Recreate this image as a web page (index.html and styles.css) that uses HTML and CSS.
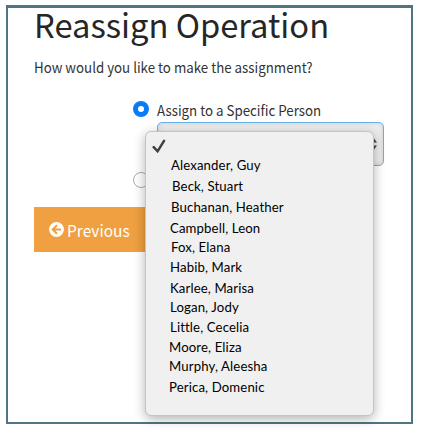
FILE: index.html
```html
<!DOCTYPE html>
<html lang="en">
<head>
<meta charset="utf-8">
<title>Reassign Operation</title>
<link rel="stylesheet" href="styles.css">
</head>
<body>
<main class="frame">
  <h1 class="title">Reassign Operation</h1>
  <p class="question">How would you like to make the assignment?</p>
  <div class="choice">
    <span class="radio checked"></span>
    <div class="field">
      <label class="label">Assign to a Specific Person</label>
      <div class="select">
        <svg class="arrows" width="8" height="14" viewBox="0 0 8 14"><path d="M4 0L8 5.5H0zM4 14L0 8.5H8z" fill="#444"/></svg>
        <div class="menu">
          <svg class="check" width="14" height="15" viewBox="0 0 14 15"><path d="M1.7 8.2L5.6 12.3L12 1.8" fill="none" stroke="#414141" stroke-width="2.5" stroke-linecap="round" stroke-linejoin="miter"/></svg>
          <ul class="people">
            <li class="in2">Alexander, Guy</li>
            <li class="in3">Beck, Stuart</li>
            <li class="in2">Buchanan, Heather</li>
            <li class="in1">Campbell, Leon</li>
            <li class="in2">Fox, Elana</li>
            <li class="in1">Habib, Mark</li>
            <li class="in1">Karlee, Marisa</li>
            <li class="in1">Logan, Jody</li>
            <li class="in1">Little, Cecelia</li>
            <li>Moore, Eliza</li>
            <li>Murphy, Aleesha</li>
            <li>Perica, Domenic</li>
          </ul>
        </div>
      </div>
    </div>
  </div>
  <div class="choice second"><span class="radio"></span></div>
  <button class="previous">
    <svg width="15" height="15" viewBox="0 0 15 15"><circle cx="7.5" cy="7.5" r="7.4" fill="#fff"/><path d="M8 3.2L3.7 7.5L8 11.8M4 7.5H12" fill="none" stroke="#f0a040" stroke-width="2"/></svg>
    <span class="caption">Previous</span>
  </button>
</main>
</body>
</html>
```
FILE: styles.css
```css
* { box-sizing: border-box; }
body {
  margin: 0;
  height: 430px;
  padding: 5px 10px 6px 6px;
  background: #fff;
  overflow: hidden;
  font-family: "Noto Sans CJK SC", "Noto Sans", sans-serif;
  color: #333;
}
.frame {
  width: 407px;
  height: 419px;
  border: 2px solid #4f7585;
  border-top-width: 3px;
  padding-left: 26px;
}
.title {
  margin: 0;
  height: 46px;
  font-size: 32.7px;
  line-height: 32px;
  font-weight: 400;
  color: #262626;
  white-space: nowrap;
}
.question {
  margin: 3px 0 0;
  height: 20px;
  font-size: 14.5px;
  line-height: 20px;
  white-space: nowrap;
  transform: scaleX(.918);
  transform-origin: left;
}
.choice {
  display: flex;
  gap: 8px;
  margin: 23px 0 0 99px;
}
.radio {
  flex: none;
  width: 16px;
  height: 16px;
  margin-top: 1px;
  border: 1px solid #aaa;
  border-radius: 50%;
  background: #fff;
}
.radio.checked { border: 5.5px solid #087cf5; }
.label {
  display: block;
  height: 22px;
  font-size: 14.5px;
  line-height: 20px;
  white-space: nowrap;
  transform: scaleX(.918);
  transform-origin: left;
}
.select {
  position: relative;
  display: flex;
  align-items: center;
  justify-content: flex-end;
  width: 227px;
  height: 44px;
  padding-right: 6px;
  border: 1px solid #67afe9;
  border-radius: 5px;
  background: #ededed;
  box-shadow: inset 0 0 4px #ccc;
}
.menu {
  position: absolute;
  z-index: 1;
  left: -13px;
  top: 8px;
  width: 229px;
  height: 285px;
  padding-left: 23px;
  border: 1px solid #c4c4c4;
  border-radius: 6px;
  background: #f0f0f0;
  box-shadow: 0 3px 12px rgba(0, 0, 0, .3);
}
.check { display: block; margin: 7px 0 0 -17px; }
.people {
  display: grid;
  grid-template-rows: 21px 21px 21px 19px 20px 21px 19px 20px 20px 19px 21px 20px;
  margin: 1px 0 0;
  padding: 0;
  list-style: none;
  font-family: Lato, "Noto Sans", sans-serif;
  font-size: 13.2px;
  line-height: 20px;
  letter-spacing: .12px;
  color: #000;
  white-space: nowrap;
}
.in1 { padding-left: 1px; }
.in2 { padding-left: 2px; }
.in3 { padding-left: 3px; }
.second { margin: 5px 0 0 99px; }
.previous {
  display: flex;
  align-items: center;
  gap: 3px;
  width: 112px;
  height: 45px;
  margin: 19px 0 0;
  padding: 0 0 0 15px;
  border: 0;
  background: #f0a040;
  color: #fff;
  font: 16.5px/24px "Noto Sans CJK SC", sans-serif;
}
.caption {
  transform: scaleX(.94);
  transform-origin: left;
}
```
